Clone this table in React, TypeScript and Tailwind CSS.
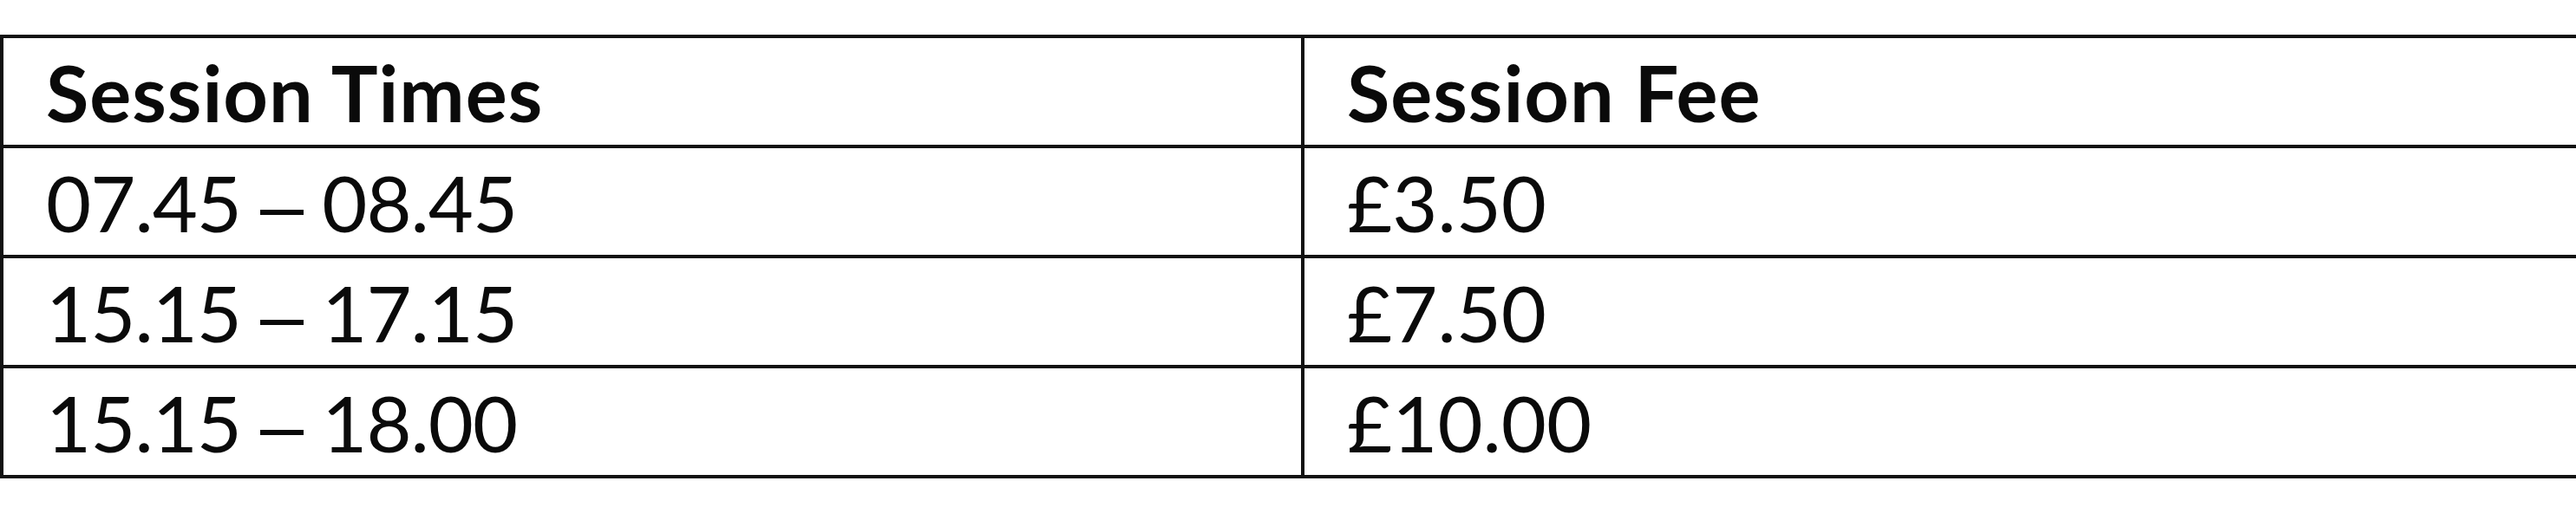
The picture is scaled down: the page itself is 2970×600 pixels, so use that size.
const rows = [
  { from: "07.45", to: "08.45", fee: "£3.50" },
  { from: "15.15", to: "17.15", fee: "£7.50" },
  { from: "15.15", to: "18.00", fee: "£10.00" },
];

function Cell({ children, className = "" }: { children: React.ReactNode; className?: string }) {
  return (
    <div
      className={
        "h-[127px] border-r-[4px] border-b-[4px] border-[#111] pl-[49px] pt-[2px] leading-[121px] whitespace-nowrap " +
        className
      }
    >
      {children}
    </div>
  );
}

export default function App() {
  return (
    <div className="h-[600px] w-full overflow-hidden bg-white pt-[40px]">
      <div className="grid w-[3000px] grid-cols-[1500px_1fr] border-l-[4px] border-t-[4px] border-[#111] font-['Lato','Noto_Sans',sans-serif] text-[90px] text-[#0a0a0a]">
        <Cell className="font-bold tracking-[1px]">Session Times</Cell>
        <Cell className="font-bold tracking-[1px]">Session Fee</Cell>
        {rows.map((row) => (
          <>
            <Cell key={row.from + row.to} className="tracking-[-1px]">
              {row.from} <span className="font-['Liberation_Sans',sans-serif]">–</span> {row.to}
            </Cell>
            <Cell key={row.fee}>{row.fee}</Cell>
          </>
        ))}
      </div>
    </div>
  );
}
